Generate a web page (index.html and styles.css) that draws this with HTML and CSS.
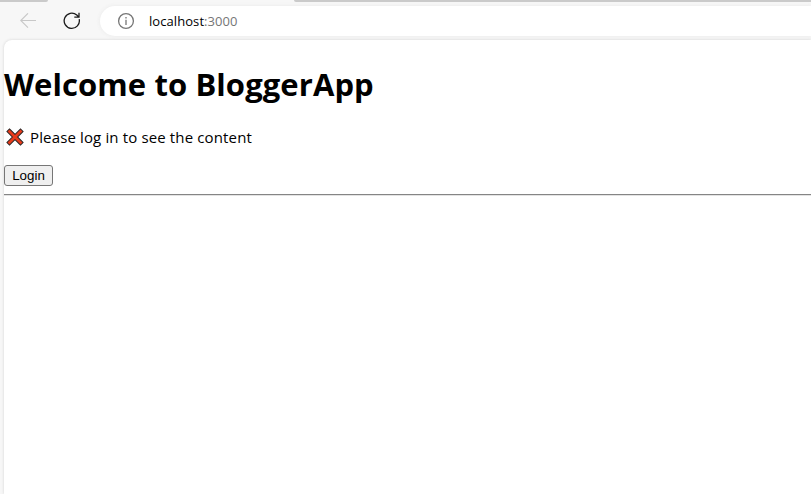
FILE: index.html
```
<!DOCTYPE html>
<html lang="en">
<head>
<meta charset="utf-8">
<title>BloggerApp</title>
<link rel="stylesheet" href="styles.css">
</head>
<body>
<div class="tabs"><div class="tab tab-left"></div><div class="tab tab-right"></div></div>
<header class="toolbar">
  <svg class="back" width="16" height="16" viewBox="0 0 16 16"><path d="M16 7.5H.8M8 .3L.8 7.5 8 14.7"/></svg>
  <svg class="reload" width="18" height="18" viewBox="0 0 18 18"><path d="M16.2 7.2A7.6 7.6 0 1 1 13.8 3.1L15.7 4.9M16 .7V5.2H11.3"/></svg>
  <div class="address">
    <svg class="info" width="18" height="18" viewBox="0 0 18 18"><circle cx="9" cy="9" r="7.4"/><path d="M9 7.8V13M9 5V6.5"/></svg>
    <span class="url">localhost<span class="port">:3000</span></span>
  </div>
</header>
<main class="page">
  <h1><span>Welcome to BloggerApp</span></h1>
  <p class="message">
    <svg class="cross" width="18" height="18" viewBox="0 0 18 18"><path class="edge" d="M3.5 3.5L14.5 14.5M14.5 3.5L3.5 14.5"/><path class="fill" d="M3.5 3.5L14.5 14.5M14.5 3.5L3.5 14.5"/></svg>
    <span>Please log in to see the content</span>
  </p>
  <button class="login">Login</button>
  <hr>
</main>
</body>
</html>
```
FILE: styles.css
```
* { box-sizing: border-box; }
body {
  margin: 0;
  height: 494px;
  overflow: hidden;
  display: flex;
  flex-direction: column;
  background: #f7f7f7;
  color: #000;
  font-family: "Open Sans", "Noto Sans", sans-serif;
}
.tabs { display: flex; justify-content: space-between; height: 2px; flex: none; }
.tab { background: #cacaca; }
.tab-left { width: 48px; border-bottom-right-radius: 3px; }
.tab-right { width: 517px; border-bottom-left-radius: 3px; }
.toolbar { display: flex; align-items: center; height: 38px; flex: none; padding-left: 20px; }
svg { flex: none; fill: none; }
.back { stroke: #c8c8c8; stroke-width: 1.1; }
.reload { margin-left: 27px; stroke: #1b1b1b; stroke-width: 1.3; }
.address {
  display: flex;
  align-items: center;
  flex: 1;
  height: 30px;
  margin-left: 19px;
  padding-left: 17px;
  background: #fff;
  border-radius: 15px 0 0 15px;
  box-shadow: 0 0 4px #e9e9e9;
}
.info { stroke: #767676; stroke-width: 1.3; }
.url { margin-left: 14px; font-size: 13px; letter-spacing: .07px; line-height: 18px; white-space: nowrap; }
.port { color: #767676; }
.page {
  flex: 1;
  margin-left: 4px;
  background: #fff;
  border-top-left-radius: 8px;
  box-shadow: 0 0 3px #d2d2d2;
}
h1 { margin: 0; padding-top: 23px; font-size: 31px; letter-spacing: .09px; line-height: 43px; white-space: nowrap; }
.message { display: flex; align-items: center; height: 22px; margin: 20px 0 17px; padding-left: 2px; font-size: 15px; letter-spacing: .14px; white-space: nowrap; }
.message span { margin-left: 6px; }
.edge { stroke: #252525; stroke-width: 4.6; }
.fill { stroke: #e73b1b; stroke-width: 2.8; }
.cross path { stroke-linecap: square; }
.login {
  display: block;
  width: 49px;
  height: 21px;
  margin-top: 0;
  padding: 0;
  border: 1px solid #767676;
  border-radius: 3px;
  background: #efefef;
  color: #000;
  font: 13.333px/18px "Liberation Sans", sans-serif;
}
hr { height: 2px; margin: 8px 0; border: 0; border-top: 1px solid #858585; border-bottom: 1px solid #e3e3e3; }
```
